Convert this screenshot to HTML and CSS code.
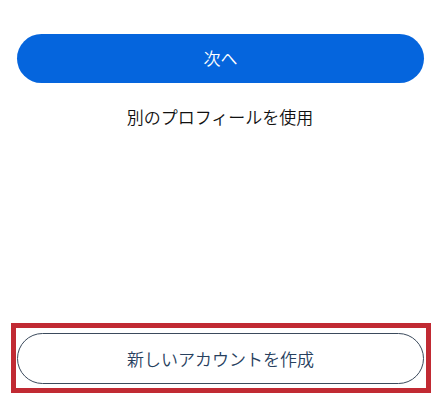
FILE: index.html
```html
<!DOCTYPE html>
<html lang="ja">
<head>
<meta charset="utf-8">
<link rel="stylesheet" href="styles.css">
</head>
<body>
<main class="page">
  <button class="btn-primary" type="button">次へ</button>
  <a class="link-profile" href="#">別のプロフィールを使用</a>
  <div class="highlight">
    <button class="btn-outline" type="button">新しいアカウントを作成</button>
  </div>
</main>
</body>
</html>
```
FILE: styles.css
```css
* { box-sizing: border-box; }
html, body {
  margin: 0;
  padding: 0;
  background: #ffffff;
}
body {
  font-family: "Noto Sans CJK JP", "Noto Sans", sans-serif;
  font-weight: 350;
}
.page {
  height: 403px;
  display: flex;
  flex-direction: column;
  align-items: stretch;
  overflow: hidden;
}
.btn-primary {
  margin: 34px 16px 0 17px;
  height: 49px;
  border: none;
  border-radius: 25px;
  background: #0565dd;
  color: #ffffff;
  font-family: inherit;
  font-weight: 350;
  font-size: 17px;
  line-height: 24px;
  padding: 0;
  padding-bottom: 2px;
}
.link-profile {
  margin-top: 22px;
  text-align: center;
  font-size: 17px;
  line-height: 24px;
  color: #111111;
  text-decoration: none;
}
.highlight {
  margin: auto 9px 10px 11px;
  border: 5px solid #c12a33;
  padding: 5px 2px 4px 1px;
}
.btn-outline {
  display: block;
  width: 100%;
  height: 51px;
  border: 1px solid #3b4a5c;
  border-radius: 26px;
  background: #ffffff;
  color: #27405e;
  font-family: inherit;
  font-weight: 350;
  font-size: 17px;
  line-height: 24px;
  padding: 0;
}
```
